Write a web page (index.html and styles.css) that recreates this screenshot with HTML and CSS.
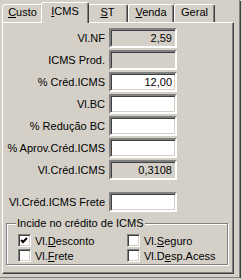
FILE: index.html
```html
<!DOCTYPE html>
<html>
<head>
    <meta charset="UTF-8"/>
    <title>ICMS</title>
    <link rel="stylesheet" href="styles.css">
</head>
<body>
<div class="frame">
    <div class="tabs">
        <div class="tab w41"><u>C</u>usto</div>
        <div class="tab active w44"><u>I</u>CMS</div>
        <div class="tab w41"><u>S</u>T</div>
        <div class="tab w46"><u>V</u>enda</div>
        <div class="tab w41">Geral</div>
    </div>
    <div class="panel">
        <div class="fields">
            <div class="row"><label>Vl.NF</label><input class="edit ro" value="2,59" readonly></div>
            <div class="row"><label>ICMS Prod.</label><input class="edit ro" value="" readonly></div>
            <div class="row"><label>% Créd.ICMS</label><input class="edit" value="12,00"></div>
            <div class="row"><label>Vl.BC</label><input class="edit" value=""></div>
            <div class="row"><label>% Redução BC</label><input class="edit" value=""></div>
            <div class="row"><label>% Aprov.Créd.ICMS</label><input class="edit" value=""></div>
            <div class="row"><label>Vl.Créd.ICMS</label><input class="edit ro" value="0,3108" readonly></div>
            <div class="row frete"><label>Vl.Créd.ICMS Frete</label><input class="edit" value=""></div>
        </div>
        <fieldset class="group">
            <legend>Incide no crédito de ICMS</legend>
            <div class="checks">
                <div class="check-item"><span class="check on"><svg width="9" height="9" viewBox="0 0 9 9"><polyline points="1,4 3,6 7,2" fill="none" stroke="#000" stroke-width="2"/></svg></span>Vl.<u>D</u>esconto</div>
                <div class="check-item"><span class="check"></span>Vl.<u>S</u>eguro</div>
                <div class="check-item"><span class="check"></span>Vl.<u>F</u>rete</div>
                <div class="check-item"><span class="check"></span>Vl.D<u>e</u>sp.Acess</div>
            </div>
        </fieldset>
    </div>
</div>
</body>
</html>
```

FILE: styles.css
```css
*{
    margin: 0;
    padding: 0;
    box-sizing: border-box;
}
body{
    background: #d4d0c8;
    font-family: "Liberation Sans", Arial, sans-serif;
    font-size: 11px;
    color: #000;
}
.frame{
    width: 240px;
    height: 278px;
    border-right: 1px solid #808080;
    border-bottom: 1px solid #808080;
    box-shadow: 1px 1px 0 #404040;
}
.tabs{
    display: flex;
    align-items: flex-end;
    height: 22px;
    padding-left: 2px;
}
.tab{
    height: 18px;
    line-height: 15px;
    text-align: center;
    border: 1px solid;
    border-color: #fff #404040 transparent #fff;
    border-bottom: none;
    border-radius: 3px 3px 0 0;
    box-shadow: inset -1px 0 #808080;
}
.w41{ width: 41px; }
.w44{ width: 44px; }
.w46{ width: 46px; }
.tab.active{
    position: relative;
    z-index: 1;
    width: 48px;
    height: 21px;
    margin: 0 -2px -1px;
    padding-top: 1px;
    background: #d4d0c8;
}
.panel{
    width: 232px;
    height: 252px;
    margin-left: 2px;
    border: 1px solid;
    border-color: #fff #404040 #404040 #fff;
    box-shadow: inset -1px -1px #808080;
}
.fields{
    display: flex;
    flex-direction: column;
    gap: 2px;
    padding-top: 5px;
}
.row{
    display: flex;
    align-items: center;
    height: 20px;
}
.row label{
    width: 102px;
    margin-right: 4px;
    text-align: right;
}
.frete{
    margin-top: 10px;
}
.edit{
    width: 68px;
    height: 20px;
    border: 2px solid;
    border-color: #808080 #fff #fff #808080;
    box-shadow: inset 1px 1px #404040, inset -1px -1px #d4d0c8;
    background: #fff;
    font: 11px "Liberation Sans", Arial, sans-serif;
    text-align: right;
    padding: 0 3px;
    outline: none;
}
.edit.ro{
    background: #d4d0c8;
}
.group{
    margin: 5px 0 0 3px;
    width: 222px;
    height: 48px;
    border: 1px solid #808080;
    box-shadow: 1px 1px 0 #fff, inset 1px 1px 0 #fff;
    padding: 0 0 0 11px;
}
.group legend{
    margin-left: -2px;
    padding: 0 1px;
    background: #d4d0c8;
    line-height: 13px;
}
.checks{
    display: grid;
    grid-template-columns: 109px 1fr;
    row-gap: 2px;
    padding-top: 4px;
}
.check-item{
    display: flex;
    align-items: center;
    height: 13px;
}
.check{
    width: 13px;
    height: 13px;
    margin-right: 4px;
    border: 1px solid;
    border-color: #808080 #fff #fff #808080;
    box-shadow: inset 1px 1px #404040, inset -1px -1px #d4d0c8;
    background: #fff;
    padding: 1px;
}
.check svg{
    display: block;
}
```
